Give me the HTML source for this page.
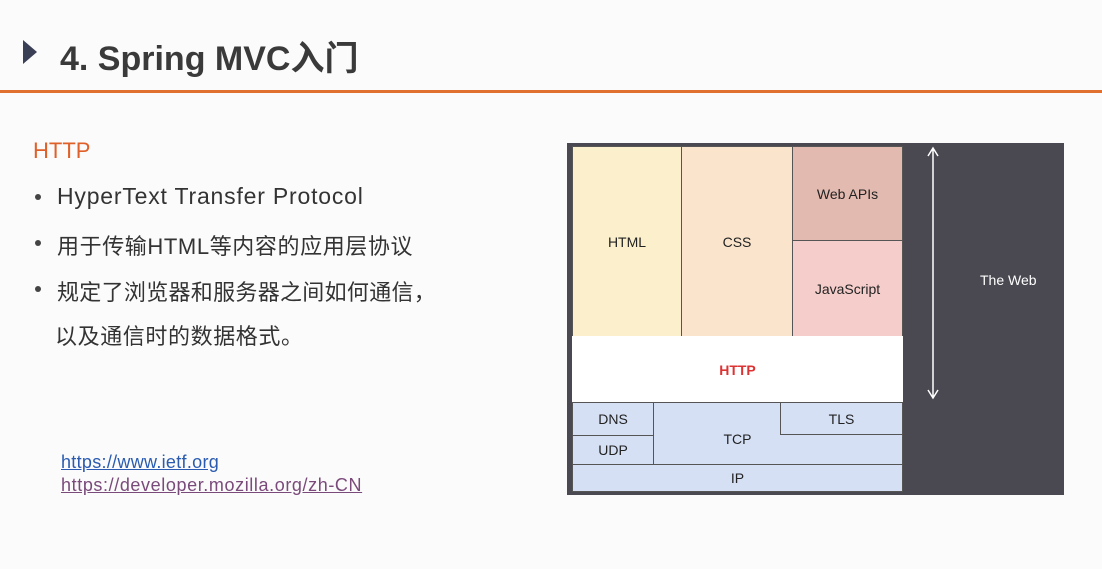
<!DOCTYPE html>
<html><head><meta charset="utf-8"><style>
body{margin:0;width:1102px;height:569px;background:#fbfbfb;font-family:"Liberation Sans","Noto Sans CJK SC",sans-serif;position:relative;overflow:hidden}
.a{position:absolute;white-space:nowrap}
.b{position:absolute;box-sizing:border-box;display:flex;align-items:center;justify-content:center;font-size:14px;color:#222}
.t{font-size:22px;color:#333}
.d{position:absolute;left:35px;width:6px;height:6px;border-radius:3px;background:#444}
</style></head><body>
<div class="a" style="left:23px;top:40px;width:0;height:0;border-top:12px solid transparent;border-bottom:12px solid transparent;border-left:14px solid #3a3f55"></div>
<div class="a" style="left:60px;top:31px;font-size:34px;font-weight:bold;color:#3a3a3a">4. Spring MVC入门</div>
<div class="a" style="left:0;top:90px;width:1102px;height:3px;background:#e07030"></div>
<div class="a" style="left:33px;top:138px;font-size:22px;color:#e0602a">HTTP</div>
<div class="d" style="top:194px"></div><div class="a t" style="left:57px;top:183px;font-size:23px;letter-spacing:0.8px">HyperText Transfer Protocol</div>
<div class="d" style="top:240px"></div><div class="a t" style="left:57px;top:229px;font-size:22px;letter-spacing:0.6px">用于传输HTML等内容的应用层协议</div>
<div class="d" style="top:286px"></div><div class="a t" style="left:57px;top:275px;letter-spacing:0.3px">规定了浏览器和服务器之间如何通信，</div>
<div class="a t" style="left:55px;top:319px;letter-spacing:0.6px">以及通信时的数据格式。</div>
<div class="a" style="left:61px;top:452px;font-size:18px;letter-spacing:0.3px;color:#2a5bb0;text-decoration:underline">https://www.ietf.org</div>
<div class="a" style="left:61px;top:475px;font-size:18px;letter-spacing:0.6px;color:#7a4a7a;text-decoration:underline">https://developer.mozilla.org/zh-CN</div>

<div class="a" style="left:567px;top:143px;width:497px;height:352px;background:#4a4850"></div>
<div class="b" style="left:572px;top:146px;width:110px;height:191px;background:#fcf0cc;border:1px solid #555">HTML</div>
<div class="b" style="left:681px;top:146px;width:112px;height:191px;background:#fae5cc;border:1px solid #555">CSS</div>
<div class="b" style="left:792px;top:146px;width:111px;height:95px;background:#e3bab0;border:1px solid #555">Web APIs</div>
<div class="b" style="left:792px;top:240px;width:111px;height:97px;background:#f5cdca;border:1px solid #555">JavaScript</div>
<div class="b" style="left:572px;top:336px;width:331px;height:67px;background:#fff;color:#d33;font-weight:bold">HTTP</div>
<div class="b" style="left:572px;top:402px;width:331px;height:63px;background:#d5e0f5;border:1px solid #555;padding-top:10px">TCP</div>
<div class="b" style="left:572px;top:402px;width:82px;height:34px;background:#d5e0f5;border:1px solid #555">DNS</div>
<div class="b" style="left:572px;top:435px;width:82px;height:30px;background:#d5e0f5;border:1px solid #555">UDP</div>
<div class="b" style="left:780px;top:402px;width:123px;height:33px;background:#d5e0f5;border:1px solid #555">TLS</div>
<div class="b" style="left:572px;top:464px;width:331px;height:28px;background:#d5e0f5;border:1px solid #555">IP</div>
<svg class="a" style="left:925px;top:146px" width="16" height="256"><path d="M8 2V252M3 10L8 2L13 10M3 244L8 252L13 244" stroke="#fff" stroke-width="1.5" fill="none"/></svg>
<div class="a" style="left:980px;top:272px;font-size:14px;color:#fff">The Web</div>
</body></html>
